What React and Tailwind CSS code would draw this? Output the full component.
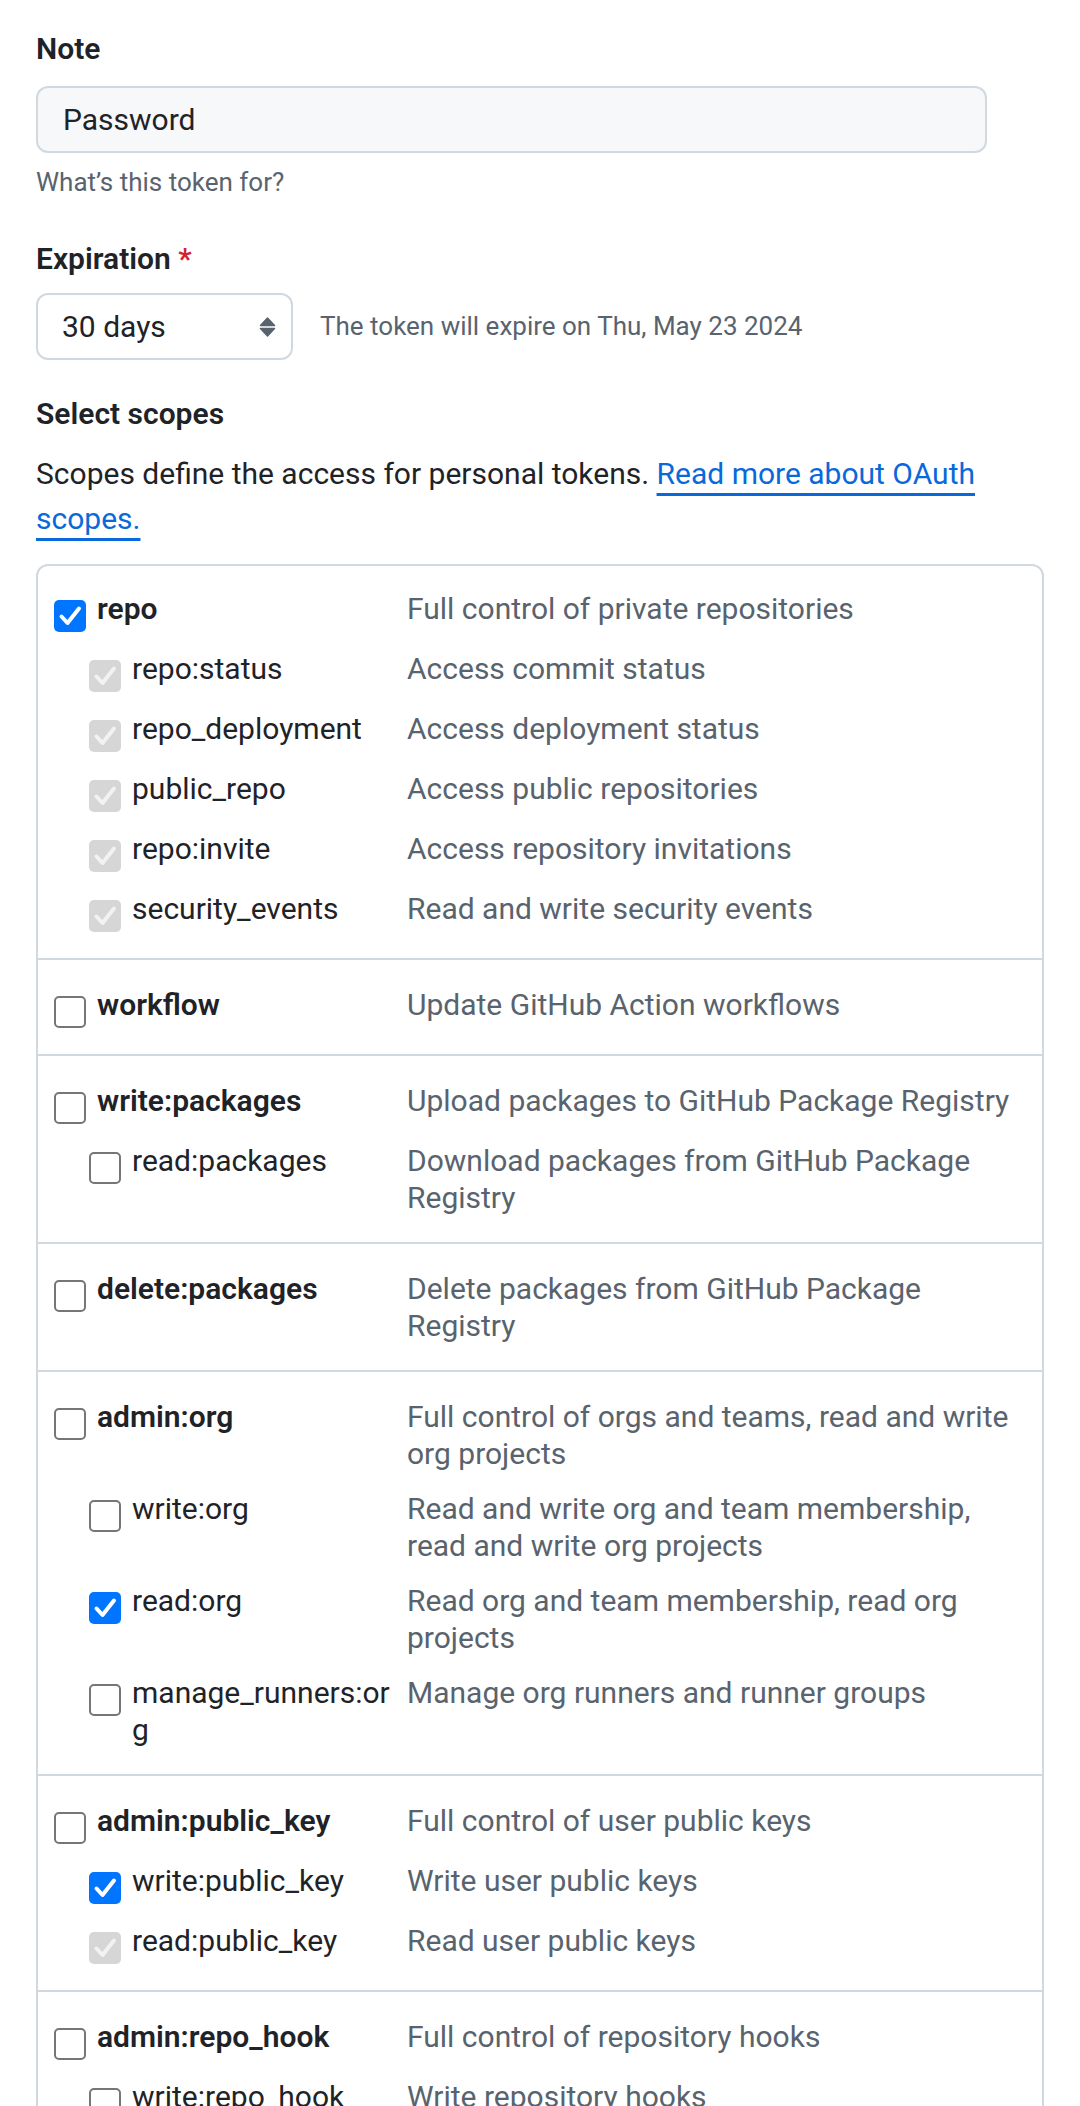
import React from 'react';

const scopeGroups = [
  {
    name: 'repo',
    desc: 'Full control of private repositories',
    state: 'checked',
    children: [
      { name: 'repo:status', desc: 'Access commit status', state: 'disabled' },
      { name: 'repo_deployment', desc: 'Access deployment status', state: 'disabled' },
      { name: 'public_repo', desc: 'Access public repositories', state: 'disabled' },
      { name: 'repo:invite', desc: 'Access repository invitations', state: 'disabled' },
      { name: 'security_events', desc: 'Read and write security events', state: 'disabled' }
    ]
  },
  { name: 'workflow', desc: 'Update GitHub Action workflows', state: 'unchecked', children: [] },
  {
    name: 'write:packages',
    desc: 'Upload packages to GitHub Package Registry',
    state: 'unchecked',
    children: [
      { name: 'read:packages', desc: 'Download packages from GitHub Package Registry', state: 'unchecked' }
    ]
  },
  { name: 'delete:packages', desc: 'Delete packages from GitHub Package Registry', state: 'unchecked', children: [] },
  {
    name: 'admin:org',
    desc: 'Full control of orgs and teams, read and write org projects',
    state: 'unchecked',
    children: [
      { name: 'write:org', desc: 'Read and write org and team membership, read and write org projects', state: 'unchecked' },
      { name: 'read:org', desc: 'Read org and team membership, read org projects', state: 'checked' },
      { name: 'manage_runners:org', desc: 'Manage org runners and runner groups', state: 'unchecked' }
    ]
  },
  {
    name: 'admin:public_key',
    desc: 'Full control of user public keys',
    state: 'unchecked',
    children: [
      { name: 'write:public_key', desc: 'Write user public keys', state: 'checked' },
      { name: 'read:public_key', desc: 'Read user public keys', state: 'disabled' }
    ]
  },
  {
    name: 'admin:repo_hook',
    desc: 'Full control of repository hooks',
    state: 'unchecked',
    children: [
      { name: 'write:repo_hook', desc: 'Write repository hooks', state: 'unchecked' },
      { name: 'read:repo_hook', desc: 'Read repository hooks', state: 'unchecked' }
    ]
  },
  { name: 'admin:org_hook', desc: 'Full control of organization hooks', state: 'unchecked', children: [] },
  { name: 'gist', desc: 'Create gists', state: 'unchecked', children: [] }
];

const Checkbox = ({ state }) => {
  if (state === 'unchecked') {
    return <span className="mt-[10px] w-[32px] h-[32px] shrink-0 rounded-[5px] border-2 border-[#767676] bg-white" />;
  }
  return (
    <span
      className={`mt-[10px] w-[32px] h-[32px] shrink-0 rounded-[5px] flex items-center justify-center ${
        state === 'checked' ? 'bg-[#0075ff]' : 'bg-[#d6d6d6]'
      }`}
    >
      <svg width="32" height="32" viewBox="0 0 32 32" fill="none">
        <path
          d="M7.5 16.5L13.5 23L25 8.5"
          stroke={state === 'checked' ? '#ffffff' : '#f2f2f2'}
          strokeWidth="4"
          strokeLinecap="round"
          strokeLinejoin="round"
        />
      </svg>
    </span>
  );
};

const ScopeRow = ({ name, desc, state, sub }) => (
  <div className="flex">
    <label className={`w-[353px] shrink-0 flex items-start gap-[11px] pr-[10px] ${sub ? 'pl-[35px]' : ''}`}>
      <Checkbox state={state} />
      <span className={`min-w-0 break-all text-[#1f2328] ${sub ? '' : 'font-semibold'}`}>{name}</span>
    </label>
    <div className="flex-1 min-w-0 text-[#59636e]">{desc}</div>
  </div>
);

const SelectArrows = () => (
  <svg width="17" height="20" viewBox="0 0 17 20" fill="#59636e">
    <path d="M8.5 1L15.5 8.5H1.5Z" stroke="#59636e" strokeWidth="1.5" strokeLinejoin="round" />
    <path d="M1.5 11.5H15.5L8.5 19Z" stroke="#59636e" strokeWidth="1.5" strokeLinejoin="round" />
  </svg>
);

export default function App() {
  return (
    <div className="min-h-screen bg-white font-['Roboto',sans-serif] text-[#1f2328] px-[36px] pt-[28px]">
      {/* Note */}
      <div className="text-[30px] leading-[42px] font-semibold">Note</div>
      <div className="mt-[16px] w-[951px] h-[67px] rounded-[12px] border-2 border-[#d1d9e0] bg-[#f6f8fa] flex items-center pl-[25px] text-[30px]">
        Password
      </div>
      <p className="mt-[11px] text-[26px] leading-[36px] text-[#59636e]">What’s this token for?</p>

      {/* Expiration */}
      <div className="mt-[38px] text-[30px] leading-[42px] font-semibold">
        Expiration <span className="text-[#d1242f]">*</span>
      </div>
      <div className="mt-[13px] flex items-center gap-[27px]">
        <div className="w-[257px] h-[67px] rounded-[12px] border-2 border-[#d1d9e0] bg-white flex items-center justify-between pl-[24px] pr-[15px] text-[30px]">
          <span>30 days</span>
          <SelectArrows />
        </div>
        <span className="text-[26px] text-[#59636e]">The token will expire on Thu, May 23 2024</span>
      </div>

      {/* Scopes */}
      <div className="mt-[33px] text-[30px] leading-[42px] font-semibold">Select scopes</div>
      <p className="mt-[16px] text-[30px] leading-[45px]">
        Scopes define the access for personal tokens.{' '}
        <a
          href="#"
          className="text-[#0969da] underline decoration-[3px] underline-offset-[9px]"
        >
          Read more about OAuth scopes.
        </a>
      </p>

      <div className="mt-[23px] border-2 border-[#d1d9e0] rounded-[12px] text-[30px] leading-[37px]">
        {scopeGroups.map((group, i) => (
          <div
            key={group.name}
            className={`pl-[16px] pr-[12px] pb-[26px] flex flex-col gap-[18px] ${
              i > 0 ? 'pt-[26px] border-t-2 border-[#d1d9e0]' : 'pt-[24px]'
            }`}
          >
            <ScopeRow name={group.name} desc={group.desc} state={group.state} />
            {group.children.map((child) => (
              <ScopeRow key={child.name} {...child} sub />
            ))}
          </div>
        ))}
      </div>
    </div>
  );
}
